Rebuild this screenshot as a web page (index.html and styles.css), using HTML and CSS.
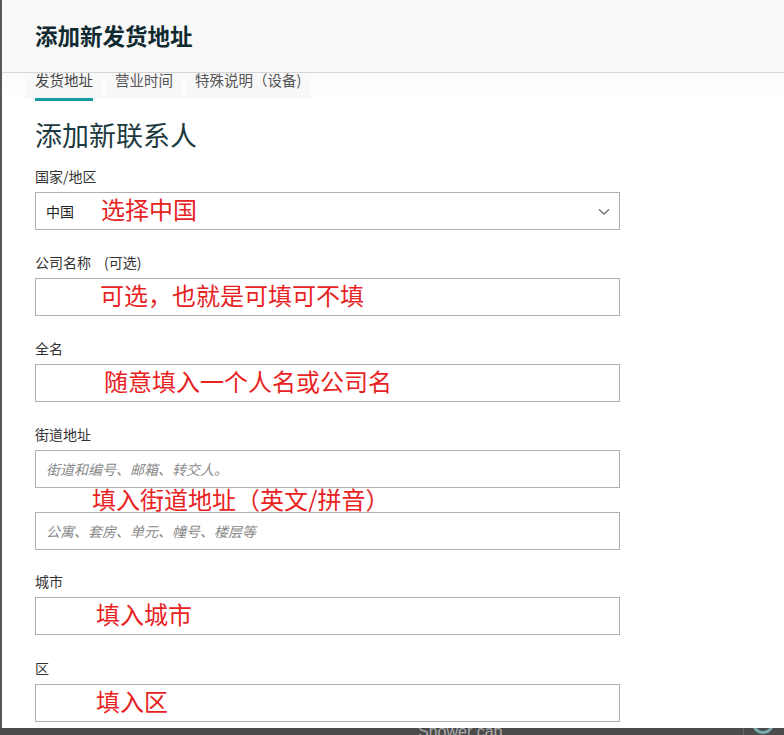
FILE: index.html
```html
<!DOCTYPE html>
<html lang="zh-CN">
<head>
<meta charset="utf-8">
<title>添加新发货地址</title>
<link rel="stylesheet" href="styles.css">
</head>
<body>
<div class="modal">
  <header class="modal-header">
    <h1 class="modal-title">添加新发货地址</h1>
  </header>
  <nav class="tabs">
    <div class="tab active"><span class="tab-label">发货地址</span></div>
    <div class="tab"><span class="tab-label">营业时间</span></div>
    <div class="tab"><span class="tab-label">特殊说明（设备)</span></div>
  </nav>
  <main class="form">
    <h2 class="form-heading">添加新联系人</h2>

    <div class="field">
      <div class="label">国家/地区</div>
      <div class="box select">
        <span class="value">中国</span>
        <span class="note note-country">选择中国</span>
        <svg class="chevron" width="12" height="8" viewBox="0 0 12 8"><path d="M1 1.5 L6 6 L11 1.5" fill="none" stroke="#777" stroke-width="1.6"/></svg>
      </div>
    </div>

    <div class="field">
      <div class="label">公司名称<span class="optional">(可选)</span></div>
      <div class="box"><span class="note note-company">可选，也就是可填可不填</span></div>
    </div>

    <div class="field">
      <div class="label">全名</div>
      <div class="box"><span class="note note-name">随意填入一个人名或公司名</span></div>
    </div>

    <div class="field">
      <div class="label">街道地址</div>
      <div class="box"><span class="placeholder">街道和编号、邮箱、转交人。</span></div>
      <div class="note between">填入街道地址（英文/拼音）</div>
      <div class="box"><span class="placeholder">公寓、套房、单元、幢号、楼层等</span></div>
    </div>

    <div class="field field-city">
      <div class="label">城市</div>
      <div class="box"><span class="note note-city">填入城市</span></div>
    </div>

    <div class="field field-last">
      <div class="label">区</div>
      <div class="box"><span class="note note-city">填入区</span></div>
    </div>
  </main>
</div>
<div class="backdrop">
  <span class="bg-text">Shower cap</span>
  <span class="bg-sep"></span>
  <span class="bg-icon"></span>
</div>
</body>
</html>
```

FILE: styles.css
```css
* { box-sizing: border-box; }
html, body { margin: 0; padding: 0; }
body {
  width: 784px;
  height: 735px;
  overflow: hidden;
  background: #4b4b4b;
  font-family: "Noto Sans CJK SC", "Noto Sans", sans-serif;
  color: #333;
}
.modal {
  height: 728px;
  background: #fff;
  border-left: 2px solid #585858;
  overflow: hidden;
}
.modal-header {
  height: 73px;
  background: #f9f9f9;
  border-bottom: 1px solid #d6d6d6;
  display: flex;
  align-items: center;
  padding-left: 33px;
}
.modal-title {
  margin: 0;
  font-size: 22.5px;
  font-weight: 700;
  color: #0f2a30;
  line-height: 1;
  padding-bottom: 1px;
}
.tabs {
  display: flex;
  padding-left: 23px;
  height: 29px;
  background: linear-gradient(#fbfbfb, #fff);
}
.tab {
  height: 26px;
  padding: 0 10px;
  background: #f8f8f8;
  display: flex;
  align-items: flex-start;
  margin-right: 2px;
}
.tab-label {
  font-size: 14.5px;
  line-height: 16px;
  color: #555;
  margin-top: -1px;
  display: block;
  height: 29px;
  border-bottom: 3px solid transparent;
}
.tab.active .tab-label {
  color: #444;
  border-bottom-color: #1a99a2;
}
.form {
  padding-left: 33px;
  width: 618px;
}
.form-heading {
  margin: 16px 0 0;
  font-size: 27px;
  font-weight: 400;
  line-height: 34px;
  color: #1d3a40;
}
.field { margin-top: 15px; }
.field + .field { margin-top: 23px; }
.field-city { margin-top: 22px !important; }
.field-last { margin-top: 24px !important; }
.label {
  font-size: 14px;
  line-height: 18px;
  color: #333;
  margin-bottom: 7px;
  white-space: pre;
}
.optional { margin-left: 13px; }
.box {
  height: 38px;
  border: 1px solid #b0b0b0;
  background: #fff;
  display: flex;
  align-items: center;
  position: relative;
  padding-left: 10px;
}
.value {
  font-size: 14px;
  color: #222;
  width: 55px;
}
.chevron {
  position: absolute;
  right: 9px;
  top: 15px;
}
.note {
  color: #e8231f;
  font-size: 24px;
  line-height: 24px;
}
.box .note { padding-bottom: 4px; }
.note-company { margin-left: 54px; }
.note-name { margin-left: 58px; }
.note-city { margin-left: 50px; }
.between {
  padding-left: 57px;
  height: 24px;
  line-height: 22px;
  white-space: nowrap;
}
.placeholder {
  font-size: 14px;
  font-style: italic;
  color: #8a8a8a;
  padding-bottom: 1px;
}
.backdrop {
  height: 7px;
  overflow: hidden;
  display: flex;
  align-items: flex-start;
  padding-left: 418px;
}
.bg-text {
  color: #aaa;
  font-family: "Liberation Sans", sans-serif;
  font-size: 16px;
  line-height: 16px;
  margin-top: -4px;
}
.bg-sep {
  width: 1px;
  height: 7px;
  background: #666;
  margin-left: 240px;
}
.bg-icon {
  width: 22px;
  height: 22px;
  border: 3px solid #7aa;
  border-radius: 50%;
  margin-left: 8px;
  margin-top: -16px;
}
```
